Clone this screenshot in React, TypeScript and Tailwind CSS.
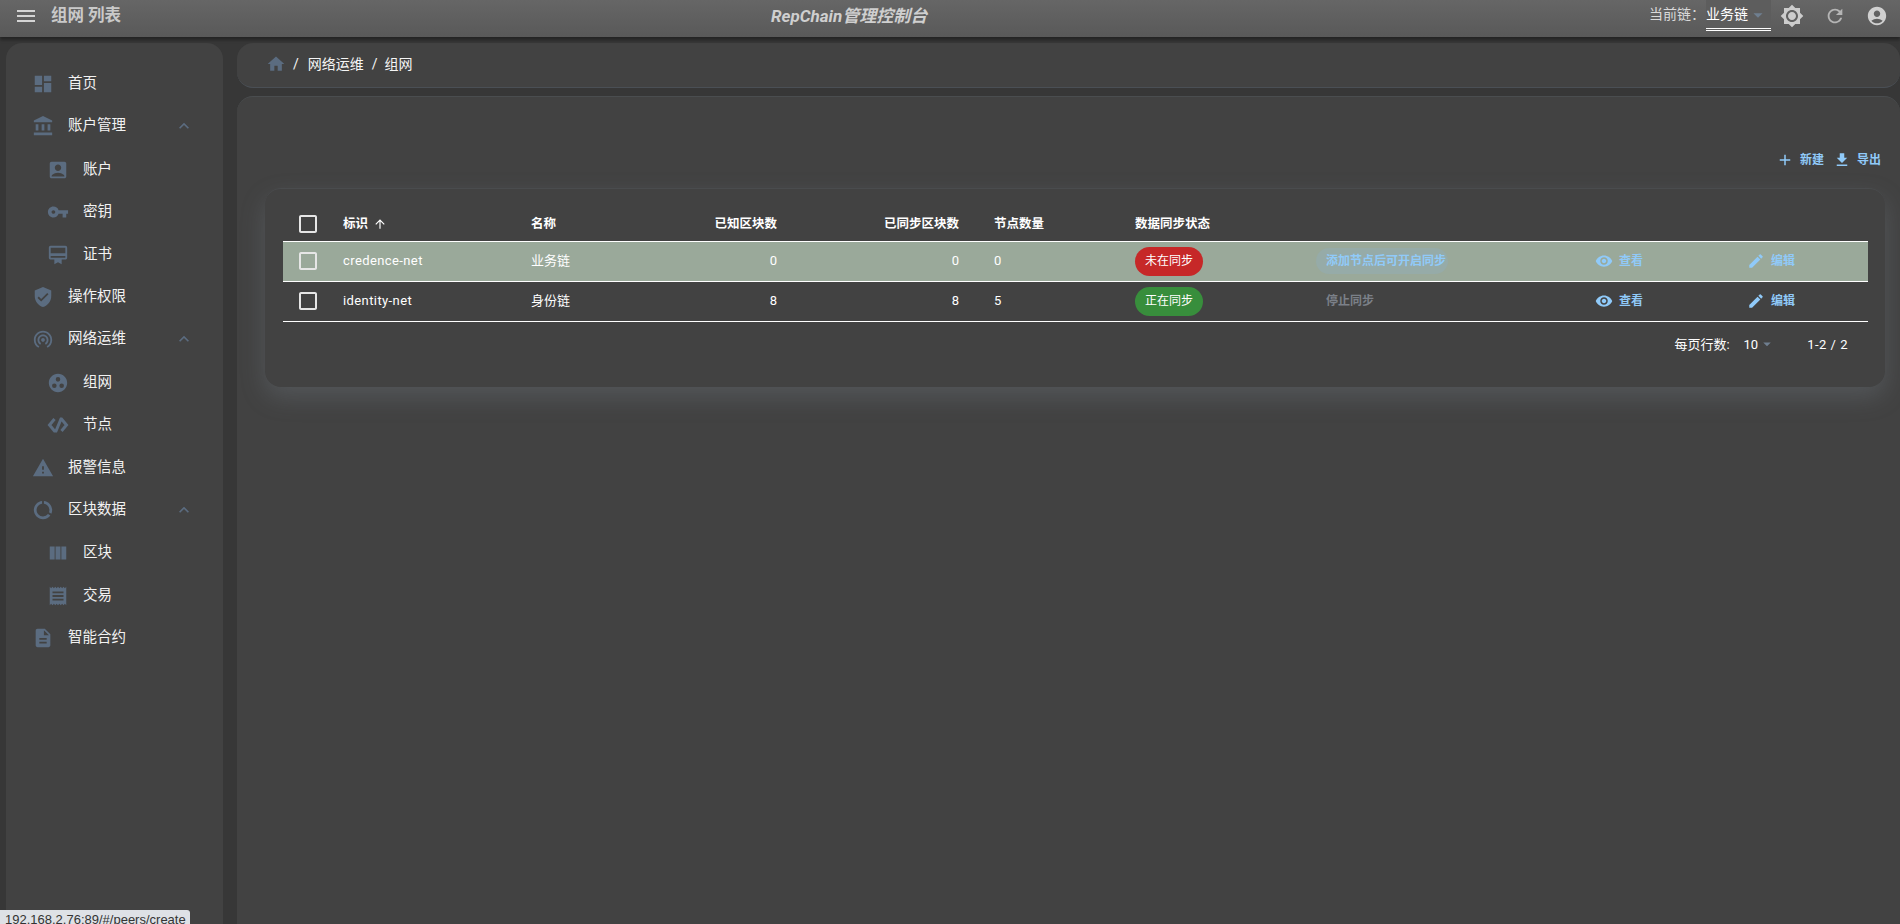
import type { ReactNode } from "react";
import {
  MdAccountBalance,
  MdAccountBox,
  MdAccountCircle,
  MdAdd,
  MdArrowUpward,
  MdArrowDropDown,
  MdBrightness7,
  MdCardMembership,
  MdCheckBoxOutlineBlank,
  MdDashboard,
  MdDataUsage,
  MdDescription,
  MdEdit,
  MdExpandLess,
  MdGetApp,
  MdGroupWork,
  MdHome,
  MdMenu,
  MdReceipt,
  MdRefresh,
  MdRemoveRedEye,
  MdVerifiedUser,
  MdViewColumn,
  MdVpnKey,
  MdWarning,
  MdWifiTethering,
} from "react-icons/md";

// the node icon isn't in the package: two chevrons joined by a slash
function NodeIcon() {
  return (
    <svg viewBox="0 0 24 24" width="24" height="24" fill="none" stroke="currentColor" strokeWidth="3">
      <path d="M8.5 6 L3.5 12 L8.5 18 H10 L15 6 H15.5 L20.5 12 L15.5 18" />
    </svg>
  );
}

// sidebar rows, in order. sub = indented child, open = shows the chevron
type NavItem = { label: string; icon: ReactNode; sub?: boolean; open?: boolean };

const navItems: NavItem[] = [
  { label: "首页", icon: <MdDashboard /> },
  { label: "账户管理", icon: <MdAccountBalance />, open: true },
  { label: "账户", icon: <MdAccountBox />, sub: true },
  { label: "密钥", icon: <MdVpnKey />, sub: true },
  { label: "证书", icon: <MdCardMembership />, sub: true },
  { label: "操作权限", icon: <MdVerifiedUser /> },
  { label: "网络运维", icon: <MdWifiTethering />, open: true },
  { label: "组网", icon: <MdGroupWork />, sub: true },
  { label: "节点", icon: <NodeIcon />, sub: true },
  { label: "报警信息", icon: <MdWarning /> },
  { label: "区块数据", icon: <MdDataUsage />, open: true },
  { label: "区块", icon: <MdViewColumn />, sub: true },
  { label: "交易", icon: <MdReceipt />, sub: true },
  { label: "智能合约", icon: <MdDescription /> },
];

function NavRow({ item }: { item: NavItem }) {
  return (
    <div className={`flex items-center text-[14.5px] text-[#f2f2f2] ${item.open ? "mb-[2px] h-[41px]" : "h-[42.5px]"} ${item.sub ? "pl-[40px]" : "pl-[25px]"}`}>
      <span className="flex w-[24px] justify-center text-[22px] text-[#5b6c80]">{item.icon}</span>
      <span className="ml-[13px] flex-1">{item.label}</span>
      {item.open && <MdExpandLess className="mr-[29px] text-[20px] text-[#5b6c80]" />}
    </div>
  );
}

function Sidebar() {
  return (
    <aside className="ml-[6px] w-[217px] shrink-0 rounded-t-[16px] bg-[#424242] pt-[20px]">
      {navItems.map((item) => (
        <NavRow key={item.label} item={item} />
      ))}
    </aside>
  );
}

function TopBar() {
  return (
    <header className="relative z-10 flex h-[37px] shrink-0 items-center bg-gradient-to-b from-[#666666] to-[#595959] pb-[6px] shadow-[0_3px_3px_rgba(0,0,0,0.35)]">
      <MdMenu className="ml-[14px] text-[24px] text-[#d4d4d4]" />
      <span className="ml-[13px] pt-[1px] text-[16.5px] font-bold text-[#c9c9c9]">组网 列表</span>
      <div className="flex flex-1 justify-center pr-[72px] pt-[2px]">
        <span className="text-[17px] font-bold italic text-[#cfcfcf]">RepChain管理控制台</span>
      </div>
      <span className="pb-[2px] text-[14px] text-[#d9d9d9]">{"当前链\uFF1A"}</span>
      <div className="ml-[1px] flex h-[31px] w-[65px] items-center self-start border-b-[3px] border-double border-white bg-[#5d5d5d] pt-[1px]">
        <span className="text-[14px] text-white">业务链</span>
        <MdArrowDropDown className="ml-[-1px] text-[22px] text-[#6f7f90]" />
      </div>
      <MdBrightness7 className="ml-[9px] text-[24px] text-[#cccccc]" />
      <MdRefresh className="ml-[20px] text-[22px] text-[#b5b5b5]" />
      <MdAccountCircle className="ml-[20px] mr-[12px] text-[22px] text-[#d0d0d0]" />
    </header>
  );
}

function Breadcrumb() {
  return (
    <div className="flex h-[45px] shrink-0 items-center rounded-[16px] border-b border-[#4a4f55] bg-[#424242] pb-[2px] pl-[29px] text-[14px] text-[#f5f5f5]">
      <MdHome className="text-[20px] text-[#5b6c80]" />
      <span className="ml-[7px]">/</span>
      <span className="ml-[9px]">网络运维</span>
      <span className="ml-[8px]">/</span>
      <span className="ml-[7px]">组网</span>
    </div>
  );
}

function ActionLink({ icon, children }: { icon: ReactNode; children: ReactNode }) {
  return (
    <span className="flex items-center text-[12px] font-bold text-[#90caf9]">
      {icon}
      <span className="ml-[6px]">{children}</span>
    </span>
  );
}

function SyncChip({ ok }: { ok: boolean }) {
  return (
    <span className={`flex h-[29px] w-[68px] items-center justify-center rounded-[16px] text-[12px] text-white ${ok ? "bg-[#388e3c]" : "bg-[#c62828]"}`}>
      {ok ? "正在同步" : "未在同步"}
    </span>
  );
}

const rows = [
  { id: "credence-net", name: "业务链", known: 0, synced: 0, peers: 0, ok: false },
  { id: "identity-net", name: "身份链", known: 8, synced: 8, peers: 5, ok: true },
];

function PeerTable() {
  return (
    <table className="w-[1585px] table-fixed border-collapse text-[13px] text-white">
      <thead>
        <tr className="h-[35px] border-b border-white text-left text-[12.5px] font-bold [&>th]:pt-[2px]">
          <th className="w-[60px] pl-[13px]">
            <MdCheckBoxOutlineBlank className="text-[24px] text-[#e6e6e6]" />
          </th>
          <th className="w-[188px]">
            <span className="flex items-center">
              标识
              <MdArrowUpward className="ml-[5px] text-[14px]" />
            </span>
          </th>
          <th className="w-[100px]">名称</th>
          <th className="w-[146px] text-right">已知区块数</th>
          <th className="w-[182px] text-right">已同步区块数</th>
          <th className="w-[176px] pl-[35px]">节点数量</th>
          <th className="w-[181px]">数据同步状态</th>
          <th className="w-[279px]" />
          <th className="w-[152px]" />
          <th />
        </tr>
      </thead>
      <tbody>
        {rows.map((r) => (
          <tr key={r.id} className={`h-[40px] border-b border-white ${r.ok ? "" : "bg-[#9aa99a]"}`}>
            <td className="pl-[13px]">
              <MdCheckBoxOutlineBlank className="text-[24px] text-[#e6e6e6]" />
            </td>
            <td className="tracking-[0.4px]">{r.id}</td>
            <td>{r.name}</td>
            <td className="text-right">{r.known}</td>
            <td className="text-right">{r.synced}</td>
            <td className="pl-[35px]">{r.peers}</td>
            <td>
              <SyncChip ok={r.ok} />
            </td>
            <td>
              {r.ok ? (
                <span className="ml-[10px] text-[12px] font-bold text-[#7b8088]">停止同步</span>
              ) : (
                <span className="inline-flex h-[26px] w-[132px] items-center rounded-[13px] bg-[#96aba8] pl-[10px] text-[12px] font-bold text-[#90caf9]">
                  添加节点后可开启同步
                </span>
              )}
            </td>
            <td>
              <ActionLink icon={<MdRemoveRedEye className="text-[18px]" />}>查看</ActionLink>
            </td>
            <td>
              <ActionLink icon={<MdEdit className="text-[18px]" />}>编辑</ActionLink>
            </td>
          </tr>
        ))}
      </tbody>
    </table>
  );
}

export default function App() {
  return (
    <div className="relative flex h-screen flex-col overflow-hidden bg-[#373737] font-['Roboto','Noto_Sans_CJK_SC',sans-serif]">
      <TopBar />
      <div className="flex min-h-0 flex-1 pt-[6px]">
        <Sidebar />
        <main className="ml-[14px] flex min-w-0 flex-1 flex-col gap-[8px]">
          <Breadcrumb />
          <section className="flex-1 rounded-t-[16px] border-t border-[#4a4d4f] bg-[#424242] pl-[28px] pr-[15px]">
            <div className="flex h-[91px] items-end justify-end gap-[9px] pb-[19px] pr-[4px]">
              <ActionLink icon={<MdAdd className="text-[18px]" />}>新建</ActionLink>
              <ActionLink icon={<MdGetApp className="text-[18px]" />}>导出</ActionLink>
            </div>
            <div className="h-[199px] rounded-[16px] border-t border-[#4a4c4e] px-[18px] pt-[17px] shadow-[0_10px_24px_rgba(130,140,150,0.28)]">
              <PeerTable />
              <div className="mt-[13px] flex items-center justify-end text-[13px] text-white">
                <span>每页行数:</span>
                <span className="ml-[14px]">10</span>
                <MdArrowDropDown className="text-[18px] text-[#6f7f90]" />
                <span className="ml-[31px] mr-[19px] tracking-[0.5px]">1-2 / 2</span>
              </div>
            </div>
          </section>
        </main>
      </div>
      {/* browser link preview, bottom left */}
      <div className="absolute bottom-0 left-0 h-[14px] w-[190px] overflow-hidden rounded-tr-[3px] bg-[#dee1e6] pl-[5px] font-['Liberation_Sans',sans-serif] text-[13px] leading-[20px] text-[#333333]">
        192.168.2.76:89/#/peers/create
      </div>
    </div>
  );
}
